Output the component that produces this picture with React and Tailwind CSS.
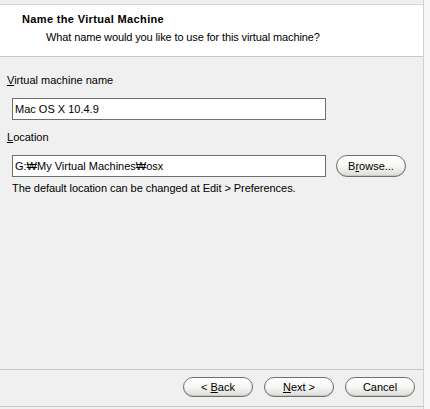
import React from 'react';

const font = { fontFamily: '"Liberation Sans", Arial, sans-serif' };

function PillButton({ children, className = '' }) {
  return (
    <button
      className={`h-[20px] rounded-full border border-[#6f6f6f] bg-gradient-to-b from-white via-[#f7f7f5] to-[#dcdcd8] text-[11px] text-black leading-none shadow-[inset_0_-1px_0_#c8c8c4] ${className}`}
    >
      {children}
    </button>
  );
}

function Field({ value }) {
  return (
    <div className="w-[314px] h-[22px] bg-white border border-[#6f6f6f] flex items-center px-[2px] text-[11px] text-black">
      {value}
    </div>
  );
}

export default function App() {
  return (
    <div className="w-[430px] h-[409px] bg-[#f0f0f0] flex overflow-hidden" style={font}>
      <div className="w-[424px] h-full flex flex-col border-r border-[#d0d0d0]">
        {/* top strip */}
        <div className="h-[5px] border-b border-[#d8d8d8] bg-[#f0f0f0]" />

        {/* header */}
        <div className="h-[52px] bg-white border-b border-[#c8c8c8] pt-[8px] pl-[22px]">
          <div className="text-[11px] font-bold text-black leading-[13px] tracking-[0.35px]">Name the Virtual Machine</div>
          <div className="text-[11px] text-black leading-[13px] mt-[5px] pl-[24px] tracking-[-0.12px]">
            What name would you like to use for this virtual machine?
          </div>
        </div>

        {/* body */}
        <div className="flex-1 pl-[7px] pt-[17px] text-[11px] text-black">
          <div className="leading-[13px]">
            <span className="underline">V</span>irtual machine name
          </div>
          <div className="pl-[5px] mt-[11px]">
            <Field value="Mac OS X 10.4.9" />
          </div>
          <div className="leading-[13px] mt-[11px]">
            <span className="underline">L</span>ocation
          </div>
          <div className="pl-[5px] mt-[11px] flex items-center gap-[10px]">
            <Field value="G:₩My Virtual Machines₩osx" />
            <PillButton className="w-[70px] h-[22px]">
              B<span className="underline">r</span>owse...
            </PillButton>
          </div>
          <div className="pl-[5px] mt-[5px] leading-[13px] tracking-[-0.05px]">
            The default location can be changed at Edit &gt; Preferences.
          </div>
        </div>

        {/* footer */}
        <div className="h-[38px] border-t border-[#c8c8c8] border-b border-b-[#c8c8c8] flex items-start justify-end pt-[7px] pr-[8px] gap-[11px]">
          <PillButton className="w-[70px]">
            &lt; <span className="underline">B</span>ack
          </PillButton>
          <PillButton className="w-[70px]">
            <span className="underline">N</span>ext &gt;
          </PillButton>
          <PillButton className="w-[70px]">Cancel</PillButton>
        </div>
        <div className="h-[2px]" />
      </div>
      <div className="flex-1 bg-[#f7f7f7]" />
    </div>
  );
}
